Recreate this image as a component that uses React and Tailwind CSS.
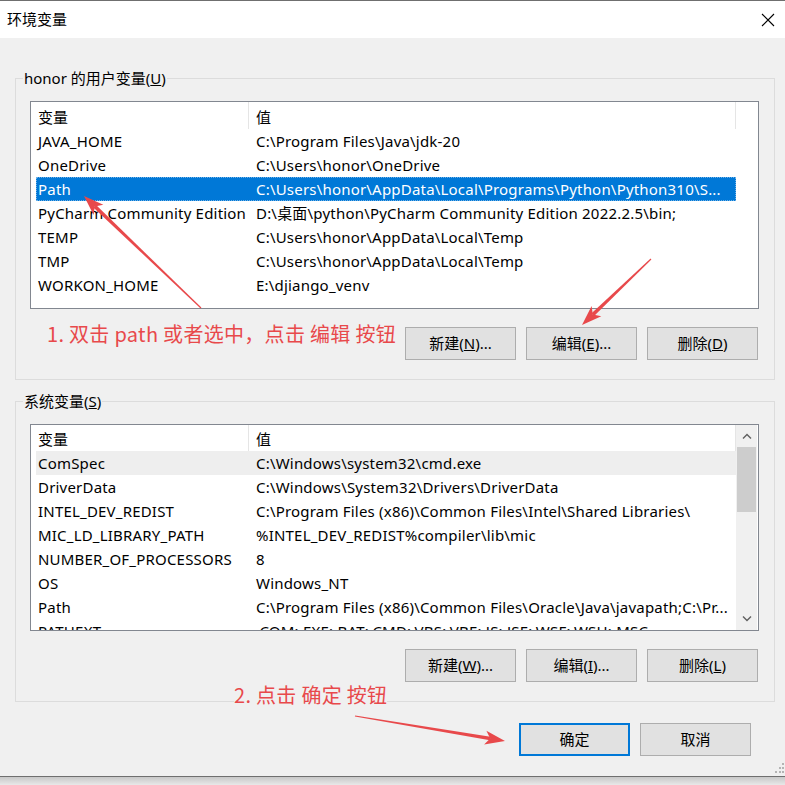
import React from "react";

const FONT = { fontFamily: '"Noto Sans", "Noto Sans CJK SC", sans-serif' };

const userVars = [
  ["JAVA_HOME", "C:\\Program Files\\Java\\jdk-20"],
  ["OneDrive", "C:\\Users\\honor\\OneDrive"],
  ["Path", "C:\\Users\\honor\\AppData\\Local\\Programs\\Python\\Python310\\S..."],
  ["PyCharm Community Edition", "D:\\桌面\\python\\PyCharm Community Edition 2022.2.5\\bin;"],
  ["TEMP", "C:\\Users\\honor\\AppData\\Local\\Temp"],
  ["TMP", "C:\\Users\\honor\\AppData\\Local\\Temp"],
  ["WORKON_HOME", "E:\\djiango_venv"],
];

const sysVars = [
  ["ComSpec", "C:\\Windows\\system32\\cmd.exe"],
  ["DriverData", "C:\\Windows\\System32\\Drivers\\DriverData"],
  ["INTEL_DEV_REDIST", "C:\\Program Files (x86)\\Common Files\\Intel\\Shared Libraries\\"],
  ["MIC_LD_LIBRARY_PATH", "%INTEL_DEV_REDIST%compiler\\lib\\mic"],
  ["NUMBER_OF_PROCESSORS", "8"],
  ["OS", "Windows_NT"],
  ["Path", "C:\\Program Files (x86)\\Common Files\\Oracle\\Java\\javapath;C:\\Pr..."],
  ["PATHEXT", ".COM;.EXE;.BAT;.CMD;.VBS;.VBE;.JS;.JSE;.WSF;.WSH;.MSC"],
];

function Row({ name, value, state }) {
  const cls =
    state === "sel"
      ? "bg-[#0078d7] text-white outline outline-1 outline-dotted outline-[#6fb1e6] -outline-offset-1"
      : state === "hover"
      ? "bg-[#eeeeee] text-black"
      : "text-black";
  return (
    <div className={`flex h-[24px] w-[700px] items-center tracking-[0.2px] ${cls}`}>
      <div className="w-[218px] shrink-0 overflow-hidden whitespace-nowrap pl-[2px]">{name}</div>
      <div className="flex-1 overflow-hidden whitespace-nowrap pl-[2px]">{value}</div>
    </div>
  );
}

function Chevron({ up }) {
  return (
    <svg width="10" height="6" viewBox="0 0 10 6">
      <path
        d={up ? "M1 5.5 L5 1.5 L9 5.5" : "M1 0.5 L5 4.5 L9 0.5"}
        fill="none"
        stroke="#606060"
        strokeWidth="1.4"
      />
    </svg>
  );
}

function ListBox({ rows, headerH, height, scroll, selected, hover }) {
  return (
    <div
      className="ml-[14px] flex w-[729px] overflow-hidden border border-[#828790] bg-white"
      style={{ height }}
    >
      <div className="w-[705px] shrink-0 pl-[5px]">
        <div className="flex w-[700px]" style={{ height: headerH }}>
          <div className="flex w-[213px] items-center border-r border-[#e5e5e5] pl-[2px] pt-[3px]">变量</div>
          <div className="flex flex-1 items-center border-r border-[#e5e5e5] pl-[7px] pt-[3px]">值</div>
        </div>
        {rows.map(([n, v], i) => (
          <Row key={i} name={n} value={v} state={i === selected ? "sel" : i === hover ? "hover" : ""} />
        ))}
      </div>
      {scroll ? (
        <div className="flex w-[21px] shrink-0 flex-col bg-[#f0f0f0]">
          <div className="flex h-[22px] items-center justify-center">
            <Chevron up />
          </div>
          <div className="mx-[1px] h-[65px] bg-[#cdcdcd]" />
          <div className="flex-1" />
          <div className="flex h-[22px] items-center justify-center">
            <Chevron />
          </div>
        </div>
      ) : (
        <div className="w-[21px] shrink-0" />
      )}
    </div>
  );
}

function Btn({ children, primary }) {
  return (
    <div
      className={`flex h-[33px] w-[111px] items-center justify-center bg-[#e1e1e1] text-black ${
        primary ? "border-2 border-[#0078d7]" : "border border-[#adadad]"
      }`}
    >
      {children}
    </div>
  );
}

function Group({ label, children }) {
  return (
    <div className="relative ml-[15px] w-[760px] border border-[#dcdcdc]">
      <div className="absolute left-[7px] top-[-13px] bg-[#f0f0f0] px-[1px] leading-[24px] text-black">{label}</div>
      {children}
    </div>
  );
}

function arrowPts(x1, y1, x2, y2) {
  const dx = x2 - x1;
  const dy = y2 - y1;
  const len = Math.hypot(dx, dy);
  const ux = dx / len;
  const uy = dy / len;
  const nx = -uy;
  const ny = ux;
  const hl = 20;
  const hw = 7;
  const bx = x2 - ux * hl;
  const by = y2 - uy * hl;
  const nbx = x2 - ux * (hl - 5);
  const nby = y2 - uy * (hl - 5);
  const shaft = [
    [x1 + nx * 0.6, y1 + ny * 0.6],
    [nbx + nx * 1.8, nby + ny * 1.8],
    [nbx - nx * 1.8, nby - ny * 1.8],
    [x1 - nx * 0.6, y1 - ny * 0.6],
  ];
  const head = [
    [x2, y2],
    [bx + nx * hw, by + ny * hw],
    [nbx, nby],
    [bx - nx * hw, by - ny * hw],
  ];
  const f = (a) => a.map((p) => p.map((v) => v.toFixed(1)).join(",")).join(" ");
  return { shaft: f(shaft), head: f(head) };
}

function Arrow({ x1, y1, x2, y2 }) {
  const { shaft, head } = arrowPts(x1, y1, x2, y2);
  return (
    <g fill="#e8494b">
      <polygon points={shaft} />
      <polygon points={head} />
    </g>
  );
}

export default function App() {
  return (
    <div className="relative h-[785px] w-[785px] overflow-hidden bg-[#dcdcdc] text-[15px]" style={FONT}>
      <div className="flex flex-col border-y border-[#6f6f6f]">
        <div className="flex h-[37px] items-center justify-between bg-white pl-[7px] pr-[10px] text-black">
          <span>环境变量</span>
          <svg width="14" height="14" viewBox="0 0 14 14">
            <path d="M1 1 L13 13 M13 1 L1 13" stroke="#000" strokeWidth="1.1" fill="none" />
          </svg>
        </div>
        <div className="relative flex h-[738px] flex-col bg-[#f0f0f0] pt-[40px]">
          <Group
            label={
              <span>
                honor 的用户变量(<u>U</u>)
              </span>
            }
          >
            <div className="pt-[22px]">
              <ListBox rows={userVars} headerH={27} height={208} selected={2} />
            </div>
            <div className="flex justify-end gap-[10px] pb-[19px] pr-[16px] pt-[18px]">
              <Btn>
                新建(<u>N</u>)...
              </Btn>
              <Btn>
                编辑(<u>E</u>)...
              </Btn>
              <Btn>
                删除(<u>D</u>)
              </Btn>
            </div>
          </Group>
          <div className="h-[21px]" />
          <Group
            label={
              <span>
                系统变量(<u>S</u>)
              </span>
            }
          >
            <div className="pt-[22px]">
              <ListBox rows={sysVars} headerH={26} height={207} scroll hover={0} />
            </div>
            <div className="flex justify-end gap-[10px] pb-[19px] pr-[16px] pt-[18px]">
              <Btn>
                新建(<u>W</u>)...
              </Btn>
              <Btn>
                编辑(<u>I</u>)...
              </Btn>
              <Btn>
                删除(<u>L</u>)
              </Btn>
            </div>
          </Group>
          <div className="flex justify-end gap-[10px] pr-[34px] pt-[21px]">
            <Btn primary>确定</Btn>
            <Btn>取消</Btn>
          </div>
          <svg className="absolute bottom-[2px] right-0" width="12" height="12" viewBox="0 0 12 12">
            <g fill="#b4b4b4">
              <rect x="9" y="1" width="2" height="2" />
              <rect x="6" y="5" width="2" height="2" />
              <rect x="9" y="5" width="2" height="2" />
              <rect x="2" y="9" width="2" height="2" />
              <rect x="6" y="9" width="2" height="2" />
              <rect x="9" y="9" width="2" height="2" />
            </g>
          </svg>
        </div>
      </div>
      <div className="h-[8px] bg-gradient-to-b from-[#c8c8c8] to-[#e8e8e8]" />

      <div
        className="absolute left-[47px] top-[320px] whitespace-nowrap text-[20px] leading-[28px] tracking-[0.3px] text-[#e8494b]"
        style={{ fontFamily: '"Noto Sans CJK SC", "Noto Sans", sans-serif' }}
      >
        1. 双击 path 或者选中，点击 编辑 按钮
      </div>
      <div
        className="absolute left-[234px] top-[681px] whitespace-nowrap bg-[#f0f0f0] text-[20px] leading-[28px] tracking-[0.3px] text-[#e8494b]"
        style={{ fontFamily: '"Noto Sans CJK SC", "Noto Sans", sans-serif' }}
      >
        2. 点击 确定 按钮
      </div>
      <svg className="pointer-events-none absolute left-0 top-0" width="785" height="785">
        <Arrow x1={201} y1={308} x2={84} y2={196} />
        <Arrow x1={651} y1={259} x2={582} y2={325} />
        <Arrow x1={355} y1={716} x2={505} y2={741} />
      </svg>
    </div>
  );
}
